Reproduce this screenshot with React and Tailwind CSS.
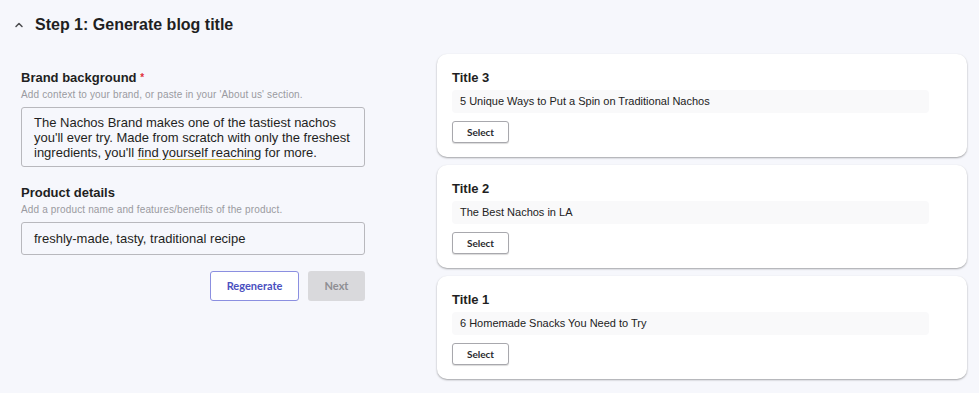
import React from 'react';

const titles = [
  { label: 'Title 3', text: '5 Unique Ways to Put a Spin on Traditional Nachos' },
  { label: 'Title 2', text: 'The Best Nachos in LA' },
  { label: 'Title 1', text: '6 Homemade Snacks You Need to Try' },
];

function ChevronUp() {
  return (
    <svg width="10" height="10" viewBox="0 0 10 10" fill="none" stroke="#4b4b4f" strokeWidth="1.5" strokeLinecap="round" strokeLinejoin="round">
      <path d="M2 6.5L5 3.5L8 6.5" />
    </svg>
  );
}

function TitleCard({ label, text }) {
  return (
    <div className="bg-white rounded-[10px] shadow-[0_1px_2px_rgba(0,0,0,0.35)] pl-[15px] pr-[38px] pt-[16px] pb-[14px] h-[103px]">
      <div className="text-[13px] font-bold text-[#1f1f22] leading-[16px]">{label}</div>
      <div className="mt-[4px] bg-[#f9f9fa] rounded-[4px] h-[23px] flex items-center px-[8px] text-[11px] text-[#222]">
        {text}
      </div>
      <button className="mt-[8px] w-[57px] h-[22px] border border-[#a8a8ad] rounded-[3px] bg-white shadow-[0_1px_1px_rgba(0,0,0,0.15)] text-[10px] font-bold text-[#2a2a2e] font-['Lato',sans-serif]">
        Select
      </button>
    </div>
  );
}

export default function App() {
  return (
    <div className="w-[979px] h-[393px] bg-[#f6f7fc] font-['Liberation_Sans',Arial,sans-serif] overflow-hidden">
      <div className="flex items-center h-[48px] pl-[14px] pt-[1px]">
        <ChevronUp />
        <h1 className="ml-[11px] text-[16px] font-bold text-[#1f1f22]">Step 1: Generate blog title</h1>
      </div>

      <div className="flex pl-[21px] pr-[12px]">
        <div className="w-[344px] pt-[22px]">
          <div className="text-[13px] font-bold text-[#1f1f22] leading-[15px]">
            Brand background <span className="text-[#e0303a] text-[10px] align-top">*</span>
          </div>
          <div className="mt-[4px] text-[10px] tracking-[0.15px] text-[#9a9aa0] leading-[12px]">
            Add context to your brand, or paste in your 'About us' section.
          </div>
          <div className="mt-[6px] h-[60px] border border-[#b8b8bd] rounded-[3px] bg-[#f6f7fc] px-[12px] pt-[7px] text-[13px] leading-[15px] text-[#1f1f22]">
            The Nachos Brand makes one of the tastiest nachos you'll ever try. Made from scratch with only the freshest ingredients, you'll{' '}
            <span className="underline decoration-[#d6c24a] underline-offset-2">find yourself reaching</span> for more.
          </div>

          <div className="mt-[18px] text-[13px] font-bold text-[#1f1f22] leading-[15px]">Product details</div>
          <div className="mt-[4px] text-[10px] tracking-[0.15px] text-[#9a9aa0] leading-[12px]">
            Add a product name and features/benefits of the product.
          </div>
          <div className="mt-[6px] h-[33px] border border-[#b8b8bd] rounded-[3px] flex items-center px-[12px] text-[13px] text-[#1f1f22]">
            freshly-made, tasty, traditional recipe
          </div>

          <div className="mt-[16px] flex justify-end gap-[9px]">
            <button className="w-[89px] h-[30px] border border-[#8b8fe0] rounded-[3px] bg-white text-[11px] font-bold text-[#4a4fc0] font-['Lato',sans-serif]">
              Regenerate
            </button>
            <button className="w-[57px] h-[30px] rounded-[3px] bg-[#d9d9dc] text-[11px] font-bold text-[#8e8e93] font-['Lato',sans-serif]">
              Next
            </button>
          </div>
        </div>

        <div className="ml-[72px] w-[530px] pt-[6px] flex flex-col gap-[8px]">
          {titles.map((t) => (
            <TitleCard key={t.label} {...t} />
          ))}
        </div>
      </div>
    </div>
  );
}
